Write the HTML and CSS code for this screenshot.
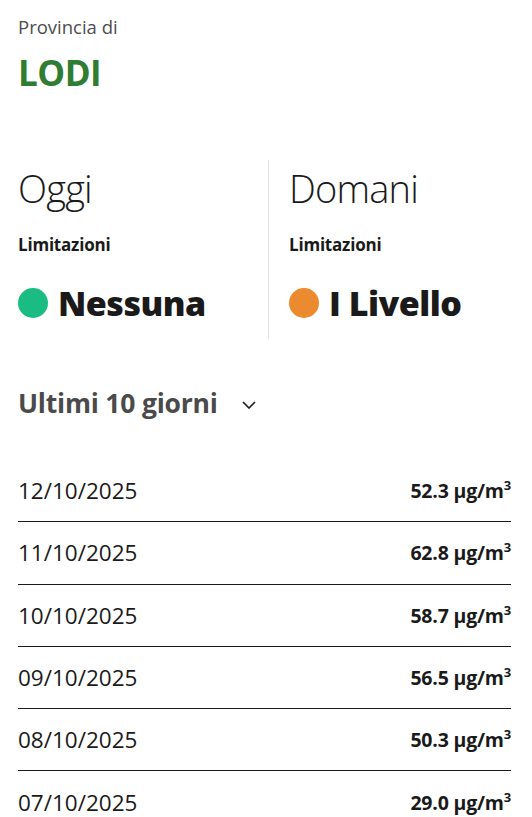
FILE: index.html
```html
<!DOCTYPE html>
<html lang="it">
<head>
<meta charset="utf-8">
<title>Provincia di Lodi</title>
<link rel="stylesheet" href="styles.css">
</head>
<body>
<main class="page">
  <header class="head">
    <div class="pre">Provincia di</div>
    <h1 class="title">LODI</h1>
  </header>

  <section class="days">
    <div class="day">
      <h2 class="day-name">Oggi</h2>
      <div class="lim">Limitazioni</div>
      <div class="status"><span class="dot dot-green"></span><span class="status-text">Nessuna</span></div>
    </div>
    <div class="day day-right">
      <h2 class="day-name">Domani</h2>
      <div class="lim">Limitazioni</div>
      <div class="status"><span class="dot dot-orange"></span><span class="status-text">I Livello</span></div>
    </div>
  </section>

  <section class="history">
    <div class="hist-head">
      <span class="hist-title">Ultimi 10 giorni</span>
      <svg class="chev" width="14" height="8" viewBox="0 0 14 8"><path d="M1 1l6 6 6-6" fill="none" stroke="#1a1a1a" stroke-width="1.6"/></svg>
    </div>
    <ul class="rows">
      <li class="row"><span class="date">12/10/2025</span><span class="val">52.3 µg/m<sup>3</sup></span></li>
      <li class="row"><span class="date">11/10/2025</span><span class="val">62.8 µg/m<sup>3</sup></span></li>
      <li class="row"><span class="date">10/10/2025</span><span class="val">58.7 µg/m<sup>3</sup></span></li>
      <li class="row"><span class="date">09/10/2025</span><span class="val">56.5 µg/m<sup>3</sup></span></li>
      <li class="row"><span class="date">08/10/2025</span><span class="val">50.3 µg/m<sup>3</sup></span></li>
      <li class="row"><span class="date">07/10/2025</span><span class="val">29.0 µg/m<sup>3</sup></span></li>
    </ul>
  </section>
</main>
</body>
</html>
```

FILE: styles.css
```css
* { box-sizing: border-box; }
html, body { margin: 0; padding: 0; background: #fff; }
body { font-family: "Open Sans", "Noto Sans", sans-serif; color: #1a1a1a; overflow: hidden; }
.page { padding: 14px 21px 0 18px; }

.head { display: flex; flex-direction: column; }
.pre { font-size: 18.5px; line-height: 26px; color: #4d4d4d; letter-spacing: 0; }
.title { margin: 13px 0 0; font-size: 35px; line-height: 40px; font-weight: 700; color: #2e7d32; letter-spacing: -0.5px; }

.days { display: flex; margin-top: 67px; }
.day { width: 250px; display: flex; flex-direction: column; }
.day-right { border-left: 1px solid #e3e3e3; padding-left: 20px; flex: 1; }
.day-name { margin: 6px 0 0; font-size: 38px; line-height: 44px; font-weight: 300; letter-spacing: -0.8px; }
.lim { margin-top: 24px; font-size: 17px; line-height: 22px; font-weight: 700; letter-spacing: -0.2px; }
.status { display: flex; align-items: center; gap: 10px; margin-top: 25px; height: 44px; margin-bottom: 14px; }
.dot { width: 30px; height: 30px; border-radius: 50%; flex: none; }
.dot-green { background: #1abc84; }
.dot-orange { background: #ec8a30; }
.status-text { font-size: 34px; line-height: 44px; font-weight: 800; letter-spacing: -0.5px; }

.history { margin-top: 46px; }
.hist-head { display: flex; align-items: center; gap: 24px; height: 36px; }
.hist-title { font-size: 26.5px; line-height: 36px; font-weight: 700; color: #4a4a4a; letter-spacing: -0.2px; }
.chev { margin-top: 4px; }

.rows { list-style: none; margin: 39px 0 0; padding: 0; }
.row { display: flex; justify-content: space-between; align-items: center; height: 62.25px; border-bottom: 1px solid #1a1a1a; }
.row:last-child { border-bottom: none; }
.date { font-size: 22.5px; font-weight: 400; color: #1a1a1a; }
.val { font-size: 19.5px; font-weight: 700; color: #1a1a1a; letter-spacing: -0.2px; }
.val sup { font-size: 13px; position: relative; top: -8px; vertical-align: 0; line-height: 0; }
```
